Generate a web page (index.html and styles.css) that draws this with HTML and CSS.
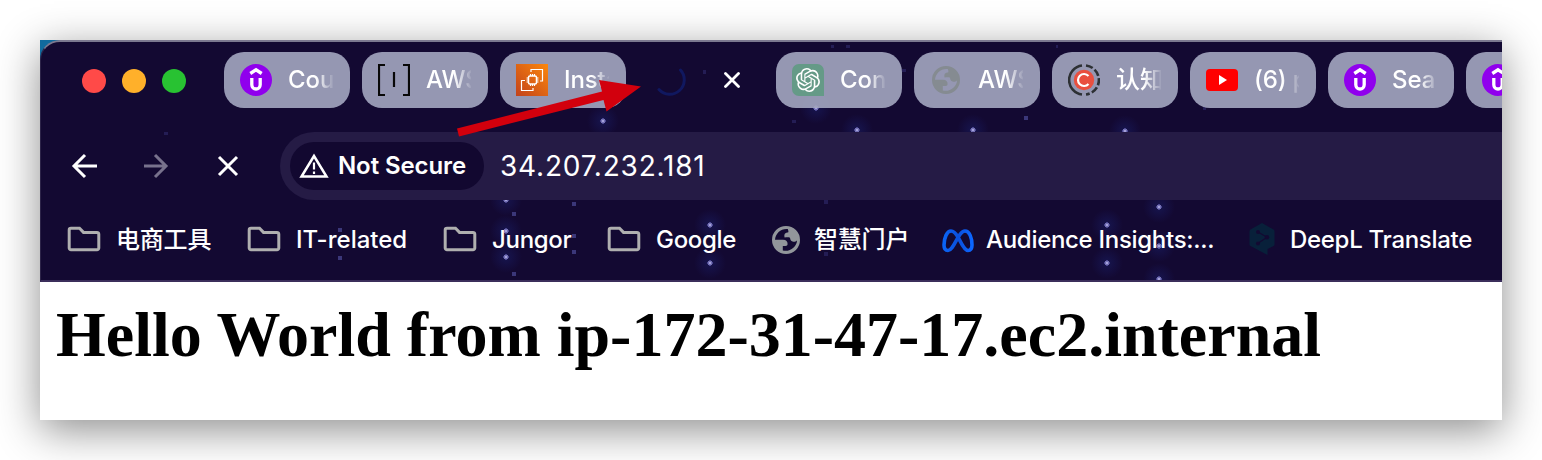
FILE: index.html
```html
<!DOCTYPE html>
<html lang="en">
<head>
<meta charset="utf-8">
<title>34.207.232.181</title>
<link rel="stylesheet" href="styles.css">
</head>
<body>
<svg class="defs" width="0" height="0" aria-hidden="true">
  <defs>
    <linearGradient id="aws" x1="0" y1="1" x2="1" y2="0"><stop offset="0" stop-color="#c2421b"/><stop offset="1" stop-color="#fb870c"/></linearGradient>
    <linearGradient id="meta" x1="0" x2="1"><stop offset="0" stop-color="#0a64f5"/><stop offset=".5" stop-color="#0b50dc"/><stop offset="1" stop-color="#0b66ff"/></linearGradient>
    <radialGradient id="glow"><stop offset="0" stop-color="#2038a0" stop-opacity=".26"/><stop offset="1" stop-color="#2030a0" stop-opacity="0"/></radialGradient>
    <symbol id="star" viewBox="-16 -16 32 32"><circle r="16" fill="url(#glow)"/><path d="M-3-1h6v2h-6zM-1-3h2v6h-2z" fill="#4a4690"/><path d="M-2-2h4v4h-4z" fill="#7370b4"/><path d="M-1-1h2v2h-2z" fill="#a5a2da"/></symbol>
    <symbol id="udemy" viewBox="0 0 32 32"><circle cx="16" cy="16" r="16" fill="#9000ed"/><path d="M10.300 9.500 16 5.800l5.700 3.700M11.800 14v6.800a4.200 4.200 0 0 0 8.400 0V14" fill="none" stroke="#fff" stroke-width="3.300"/></symbol>
    <symbol id="folder" viewBox="0 0 34 26"><path d="M4 2.300h8.500l4 4.100H30a1.800 1.800 0 0 1 1.800 1.800v13.700a1.800 1.800 0 0 1-1.800 1.800H4a1.800 1.800 0 0 1-1.800-1.800V4.100A1.800 1.800 0 0 1 4 2.300Z" fill="none" stroke="#afafaf" stroke-width="3"/></symbol>
    <symbol id="globe" viewBox="0 0 28 28"><path fill-rule="evenodd" d="M14 0a14 14 0 1 1 0 28 14 14 0 0 1 0-28ZM15.800 3C9 2.300 3.600 7 3 13.800h8c3.300 0 4.600 1.700 4.600 4.300 0 1.200-.8 1.900-2.100 1.900h-2.700v4.500c6.800 1.700 13.900-3.200 14.200-10-1 1-2.200 1.300-3.600 1.200-2.300-.2-3.200-1.700-3.400-4-1.300-.5-2.900-.3-5.400-.3-.8-3 .5-4.800 3.200-4.900 1 0 .6-2 0-3.500Z"/></symbol>
  </defs>
</svg>
<main class="window">
  <div class="chrome">
    <svg class="stars" viewBox="40 40 1462 242" width="1462" height="242" aria-hidden="true">
      <g>
        <use href="#star" x="587" y="105" width="32" height="32"/>
        <use href="#star" x="800" y="92" width="32" height="32"/>
        <use href="#star" x="841" y="114" width="32" height="32"/>
        <use href="#star" x="957" y="114" width="32" height="32"/>
        <use href="#star" x="1109" y="115" width="32" height="32"/>
        <use href="#star" x="490" y="184" width="32" height="32"/>
        <use href="#star" x="490" y="215" width="32" height="32"/>
        <use href="#star" x="490" y="241" width="32" height="32"/>
        <use href="#star" x="694" y="209" width="32" height="32"/>
        <use href="#star" x="694" y="247" width="32" height="32"/>
        <use href="#star" x="1091" y="209" width="32" height="32"/>
        <use href="#star" x="1091" y="247" width="32" height="32"/>
        <use href="#star" x="1143" y="191" width="32" height="32"/>
        <use href="#star" x="1143" y="230" width="32" height="32"/>
        <use href="#star" x="1143" y="263" width="32" height="32"/>
      </g>
      <path class="dim" d="M338 228h4v4h-4zm0 28h4v4h-4zm174-44h4v4h-4zm0 60h4v4h-4zm60-70h4v4h-4zm0 32h4v4h-4zm0 16h4v4h-4zM1024 116h4v4h-4z"/>
      <path class="faint" d="M703 70h3v4h-3zM831 45h3v3h-3zM846 45h4v3h-4zM902 69h4v3h-4zM1056 45h2v3h-2zM792 120h4v3h-4zM164 132h4v3h-4zM824 200h4v4h-4zM824 252h4v4h-4zM1203 107h3v3h-3z"/>
    </svg>
    <div class="tabstrip">
      <div class="lights"><i class="light red"></i><i class="light amber"></i><i class="light green"></i></div>
      <div class="tabs">
        <div class="tab"><svg class="fav"><use href="#udemy"/></svg><span class="label">Cour</span></div>
        <div class="tab"><svg class="fav" viewBox="0 0 32 32"><path d="M7 1H1v30h6M25 1h6v30h-6M16 8v15" fill="none" stroke="#080808" stroke-width="2.200"/></svg><span class="label">AWS</span></div>
        <div class="tab"><svg class="fav" viewBox="0 0 32 32"><path fill="url(#aws)" d="M0 0h32v32H0z"/><g fill="none" stroke="#fff" stroke-width="1.200"><rect x="12.500" y="12" width="8" height="8" rx="1.500" stroke-width="1.500"/><path d="M14.500 12v-2M16.500 12v-2M18.500 12v-2M14.500 22v-2M16.500 22v-2M18.500 22v-2M12.500 14h-2M12.500 16h-2M12.500 18h-2M22.500 14h-2M22.500 16h-2M22.500 18h-2M15 8V5.500h11.500v11.500H24M9 16.500H5.500v10H17V24"/></g></svg><span class="label">Insta</span></div>
        <div class="tab active"><svg class="fav" viewBox="0 0 32 32"><path d="M26.500 6A14 14 0 0 1 5 25.500" fill="none" stroke="#10185f" stroke-width="3" stroke-linecap="round"/></svg><svg class="close" viewBox="0 0 16 16"><path d="m1.500 1.500 13 13M14.500 1.500l-13 13"/></svg></div>
        <div class="tab"><svg class="fav" viewBox="0 0 32 32"><path d="M7 0h18a7 7 0 0 1 7 7v25H7a7 7 0 0 1-7-7V7a7 7 0 0 1 7-7Z" fill="#659a87"/><path transform="translate(4 4)" fill="#fff" d="M22.2819 9.8211a5.9847 5.9847 0 0 0-.5157-4.9108 6.0462 6.0462 0 0 0-6.5098-2.9A6.0651 6.0651 0 0 0 4.9807 4.1818a5.9847 5.9847 0 0 0-3.9977 2.9 6.0462 6.0462 0 0 0 .7427 7.0966 5.98 5.98 0 0 0 .511 4.9107 6.051 6.051 0 0 0 6.5146 2.9001A5.9847 5.9847 0 0 0 13.2599 24a6.0557 6.0557 0 0 0 5.7718-4.2058 5.9894 5.9894 0 0 0 3.9977-2.9001 6.0557 6.0557 0 0 0-.7475-7.0729zm-9.022 12.6081a4.4755 4.4755 0 0 1-2.8764-1.0408l.1419-.0804 4.7783-2.7582a.7948.7948 0 0 0 .3927-.6813v-6.7369l2.02 1.1686a.071.071 0 0 1 .038.052v5.5826a4.504 4.504 0 0 1-4.4945 4.4944zm-9.6607-4.1254a4.4708 4.4708 0 0 1-.5346-3.0137l.142.0852 4.783 2.7582a.7712.7712 0 0 0 .7806 0l5.8428-3.3685v2.3324a.0804.0804 0 0 1-.0332.0615L9.74 19.9502a4.4992 4.4992 0 0 1-6.1408-1.6464zM2.3408 7.8956a4.485 4.485 0 0 1 2.3655-1.9728V11.6a.7664.7664 0 0 0 .3879.6765l5.8144 3.3543-2.0201 1.1685a.0757.0757 0 0 1-.071 0l-4.8303-2.7865A4.504 4.504 0 0 1 2.3408 7.872zm16.5963 3.8558L13.1038 8.364 15.1192 7.2a.0757.0757 0 0 1 .071 0l4.8303 2.7913a4.4944 4.4944 0 0 1-.6765 8.1042v-5.6772a.79.79 0 0 0-.407-.667zm2.0107-3.0231l-.142-.0852-4.7735-2.7818a.7759.7759 0 0 0-.7854 0L9.409 9.2297V6.8974a.0662.0662 0 0 1 .0284-.0615l4.8303-2.7866a4.4992 4.4992 0 0 1 6.6802 4.66zM8.3065 12.863l-2.02-1.1638a.0804.0804 0 0 1-.038-.0567V6.0742a4.4992 4.4992 0 0 1 7.3757-3.4537l-.142.0805L8.704 5.459a.7948.7948 0 0 0-.3927.6813zm1.0976-2.3654l2.602-1.4998 2.6069 1.4998v2.9994l-2.5974 1.4997-2.6067-1.4997Z"/></svg><span class="label">Con</span></div>
        <div class="tab"><svg class="fav muted" viewBox="0 0 32 32"><use href="#globe" x="2" y="2" width="28" height="28"/></svg><span class="label">AWS</span></div>
        <div class="tab"><svg class="fav" viewBox="0 0 32 32"><path d="M14 1.500a14.600 14.600 0 0 0 0 29" fill="none" stroke="#2d3034" stroke-width="2.600"/><path d="M18 1.500a14.600 14.600 0 0 1 0 29" fill="none" stroke="#2d3034" stroke-width="2.600" stroke-dasharray="7.200 2.400"/><circle cx="16" cy="16" r="10.200" fill="#e94f3f"/><path d="M20.500 12a6 6 0 1 0 0 8" fill="none" stroke="#fff" stroke-width="2.200"/></svg><span class="label">认知图</span></div>
        <div class="tab"><svg class="fav" viewBox="0 0 32 32"><rect y="5" width="32" height="22" rx="4" fill="#f00"/><path d="M13 11v10l8-5z" fill="#fff"/></svg><span class="label">(6) p</span></div>
        <div class="tab"><svg class="fav"><use href="#udemy"/></svg><span class="label">Sear</span></div>
        <div class="tab"><svg class="fav"><use href="#udemy"/></svg></div>
      </div>
    </div>
    <div class="toolbar">
      <div class="nav">
        <svg class="ico" viewBox="0 0 26 26"><path d="M26 13H4M14 2 3 13l11 11"/></svg>
        <svg class="ico off" viewBox="0 0 26 26"><path d="M1 13h22M12 2l11 11-11 11"/></svg>
        <svg class="ico" viewBox="0 0 26 26"><path d="m4 4 18 18M22 4 4 22"/></svg>
      </div>
      <div class="omnibox">
        <div class="chip"><svg class="warn" viewBox="0 0 30 26"><path d="M15 3 2.500 23.500h25Z" fill="none" stroke="#fff" stroke-width="2.500"/><path d="M15 9.500v7M15 18.500V21" stroke="#fff" stroke-width="2.200"/></svg><span class="secure">Not Secure</span></div>
        <span class="url">34.207.232.181</span>
      </div>
    </div>
    <nav class="bookmarks">
      <span class="bm w1"><svg class="folder"><use href="#folder"/></svg><span class="cjk">电商工具</span></span>
      <span class="bm w2"><svg class="folder"><use href="#folder"/></svg><span class="it">IT-related</span></span>
      <span class="bm w3"><svg class="folder"><use href="#folder"/></svg><span class="name">Jungor</span></span>
      <span class="bm w4"><svg class="folder"><use href="#folder"/></svg><span class="name">Google</span></span>
      <span class="bm w5"><svg class="globe"><use href="#globe"/></svg><span class="cjk">智慧门户</span></span>
      <span class="bm w6"><svg class="meta" viewBox="0 0 32 24"><path d="M16 8C13 3 11 2 9 2 5 2 2 9 2 16c0 3.500 1.500 5.500 4 5.500 6 0 10-19.500 17-19.500 4.500 0 7 7 7 14 0 3.500-1.500 5.500-4 5.500-4 0-7.500-9-10-13.500Z" fill="none" stroke="url(#meta)" stroke-width="3.600"/></svg><span class="name">Audience Insights:...</span></span>
      <span class="bm"><svg class="deepl" viewBox="0 0 26 32"><path d="M13 0 1.500 6.500Q.5 7 .5 8.500v13q0 1 1 1.600L18.500 32v-6l6-3q1-.6 1-1.600V8.500q0-1.500-1-2Z" fill="#08203a"/><path d="m9 9 9 5.300-9 6" fill="none" stroke="#130932" stroke-width="1.200"/><g fill="#130932"><circle cx="9" cy="9" r="2"/><circle cx="18" cy="14.300" r="2.200"/><circle cx="9" cy="20.500" r="2"/></g></svg><span class="name">DeepL Translate</span></span>
    </nav>
  </div>
  <section class="page"><h1>Hello World from ip-172-31-47-17.ec2.internal</h1></section>
  <svg class="arrow" viewBox="0 0 190 60" aria-hidden="true"><path d="M0 48.500 145 11.500 142 0l42 6.500-34.500 25L146.500 20 2 56.500Z" fill="#d2000d"/></svg>
</main>
</body>
</html>
```

FILE: styles.css
```css
* { box-sizing: border-box; }
body { margin: 0; height: 460px; padding: 40px; background: #fff; overflow: hidden; font-family: Inter, "Noto Sans CJK SC", sans-serif; }
.defs { position: absolute; }
.window { position: relative; width: 1462px; height: 380px; background: #fff; box-shadow: 0 10px 40px rgba(0,0,0,.45); }
.window::before { content: ""; position: absolute; left: 0; top: 0; width: 20px; height: 20px; background: #116a9e; }
.chrome { position: relative; height: 242px; overflow: hidden; background: #130932; border-top: 2px solid #7c7990; border-left: 1px solid #2d2449; border-bottom: 2px solid #3b2e5b; border-top-left-radius: 20px; color: #fff; }
.stars { position: absolute; left: -1px; top: -2px; }
.dim { fill: #3b3779; }
.faint { fill: #241d55; }

.tabstrip { position: relative; display: flex; height: 90px; padding: 10px 0 0 41px; }
.lights { display: flex; gap: 16px; width: 142px; padding-top: 17px; flex: none; }
.light { width: 24px; height: 24px; border-radius: 50%; }
.red { background: #ff4a48; }
.amber { background: #ffb02a; }
.green { background: #28c232; }
.tabs { display: flex; gap: 12px; }
.tab { display: flex; align-items: center; flex: none; width: 126px; height: 56px; padding-left: 16px; border-radius: 20px; background: rgba(163,166,191,.91); }
.active { background: none; }
.fav { width: 32px; height: 32px; flex: none; }
.muted { fill: #858b91; }
.close { width: 16px; height: 16px; margin-left: 38px; stroke: #fff; stroke-width: 2.8; stroke-linecap: round; }
.label { width: 45px; margin-left: 16px; overflow: hidden; white-space: nowrap; font-size: 24px; line-height: 32px; font-weight: 500; letter-spacing: -.1px; -webkit-mask-image: linear-gradient(90deg,#000 62%,transparent 104%); mask-image: linear-gradient(90deg,#000 62%,transparent 104%); }

.toolbar { position: relative; display: flex; height: 68px; padding-left: 30px; }
.nav { display: flex; align-items: center; gap: 46px; width: 209px; }
.ico { width: 26px; height: 26px; fill: none; stroke: #fff; stroke-width: 3; }
.off { stroke: #78728d; }
.omnibox { display: flex; align-items: center; flex: 1; padding-left: 10px; border-radius: 34px 0 0 34px; background: #251b45; }
.chip { display: flex; align-items: center; width: 194px; height: 48px; padding-left: 9px; border-radius: 24px; background: #120830; }
.warn { width: 30px; height: 26px; margin-top: -1px; }
.secure { margin: -2px 0 0 9px; font-size: 24px; font-weight: 600; letter-spacing: -.1px; white-space: nowrap; }
.url { margin-left: 16px; font-size: 28px; letter-spacing: .8px; }

.bookmarks { position: relative; display: flex; height: 78px; padding-left: 26px; font-size: 24px; font-weight: 500; white-space: nowrap; }
.bm { display: flex; align-items: center; flex: none; letter-spacing: -.3px; }
.w1 { width: 180px; }
.w2 { width: 196px; }
.w3 { width: 164px; }
.w4 { width: 165px; }
.w5 { width: 170px; }
.w6 { width: 307px; }
.folder { width: 34px; height: 26px; margin-right: 15px; }
.globe { width: 28px; height: 28px; margin: 2px 14px 0 0; fill: #92969b; }
.meta { width: 32px; height: 24px; margin: 4px 12px 0 0; }
.deepl { width: 26px; height: 32px; margin-right: 15px; }
.cjk { margin-top: -3px; letter-spacing: -.2px; }
.it { letter-spacing: 0; }

.page { padding: 16px 16px 0; color: #000; }
h1 { margin: 0; font: bold 64px/74px "Liberation Serif", "Times New Roman", serif; white-space: nowrap; }
.arrow { position: absolute; left: 417px; top: 40px; width: 190px; height: 60px; }
```
